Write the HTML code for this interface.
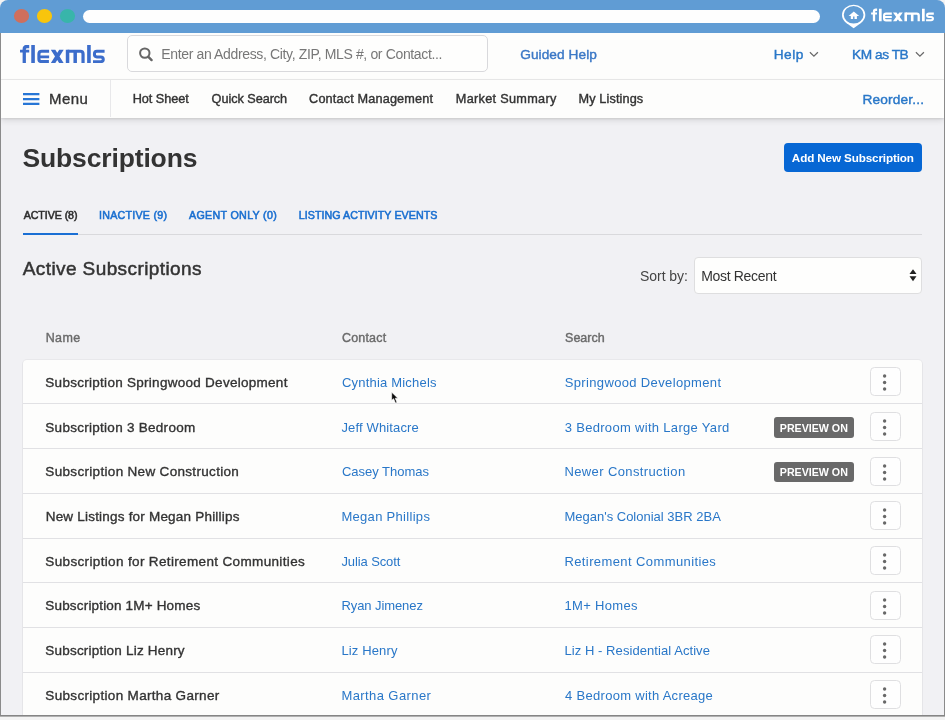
<!DOCTYPE html>
<html lang="en">
<head>
<meta charset="utf-8">
<title>Subscriptions - flexmls</title>
<style>
*{box-sizing:border-box;margin:0;padding:0}
html,body{width:945px;height:720px;overflow:hidden}
body{position:relative;background:#f3f3f3;font-family:"Liberation Sans",sans-serif;color:#333}
.abs,.t,.rb,.kb,.bd{position:absolute}
.t{white-space:nowrap;line-height:20px;height:20px}
/* window frame */
#win{position:absolute;left:0;top:0;width:945px;height:717px;background:#f1f1f4;border-radius:8px 8px 0 0;overflow:hidden}
#frameL{left:0;top:33px;width:1px;height:684px;background:#8b8b8b}
#frameR{left:944px;top:33px;width:1px;height:684px;background:#8b8b8b}
#frameB{left:0;top:715px;width:945px;height:2px;background:linear-gradient(180deg,#858585 0,#858585 50%,#b0b0b0 50%,#b0b0b0 100%)}
#titlebar{left:0;top:0;width:945px;height:33px;background:#609cd4}
.dot{position:absolute;top:9.3px;width:15.4px;height:13.6px;border-radius:50%}
#pill{left:83px;top:10.4px;width:736.5px;height:12.6px;border-radius:7px;background:#fefefe}
/* header */
#hdr{left:1px;top:33px;width:943px;height:46px;background:#fdfdfc}
#hdrline{left:1px;top:79px;width:943px;height:1px;background:#eaeaea}
#nav{left:1px;top:80px;width:943px;height:38px;background:#fdfdfc;box-shadow:0 1px 2px rgba(0,0,0,.10),0 3px 6px rgba(0,0,0,.09)}
#navdiv{left:110px;top:80px;width:1px;height:37px;background:#e8e8ea}
#search{left:127px;top:35px;width:361px;height:37px;border:1px solid #d9d9dc;border-radius:5px;background:#fefefd}
/* body */
#btn{left:784px;top:143px;width:138px;height:29px;border-radius:4px;background:#0767d4}
#tabline{left:23px;top:234px;width:899px;height:1px;background:#d9d9dc}
#tabact{left:23px;top:233px;width:54.5px;height:2px;background:#1a6fd4}
#sel{left:694px;top:257px;width:228px;height:37px;border:1px solid #dededf;border-radius:4px;background:#fefefd}
#card{left:23px;top:360px;width:899px;height:370px;background:#fdfdfc;border-radius:4px 4px 0 0;box-shadow:0 0 0 1px rgba(0,0,0,.035),0 1px 2px rgba(0,0,0,.06)}
.rb{left:23px;width:899px;height:1px;background:#e1e1e4}
.kb{left:870.4px;width:30.3px;height:29.2px;border:1px solid #dfdfe1;border-radius:4.5px;background:#fefefe}
.kb svg{position:absolute;left:0;top:0}
.bd{left:774px;width:80.4px;height:20.4px;border-radius:3px;background:#696969}
</style>
</head>
<body>
<div id="win">
  <div class="abs" id="titlebar"></div>
  <div class="dot" style="left:14.1px;background:#cf6f5d"></div>
  <div class="dot" style="left:36.7px;background:#f8c50c"></div>
  <div class="dot" style="left:59.8px;background:#38b5aa"></div>
  <div class="abs" id="pill"></div>
  <!-- title-bar pin + wordmark -->
  <svg class="abs" style="left:836px;top:0px" width="40" height="32" viewBox="836 0 40 32">
    <path fill="#fff" fill-rule="evenodd" d="M842 14.9A11.65 10.2 0 0 1 865.3 14.9C865.3 19.6 861.6 22.6 859.2 24.2L853.65 28.2 848.1 24.2C845.7 22.6 842 19.6 842 14.9ZM843.75 14.8A9.9 8.8 0 0 0 863.55 14.8A9.9 8.8 0 0 0 843.75 14.8Z"/>
    <path fill="#fff" d="M853.8 11.5L859.2 15.9H856.9V19.1H854.5V16.5H853.1V19.1H850.8V15.9H848.6Z"/>
  </svg>
  <svg class="abs" style="left:868px;top:4px" width="70" height="22" viewBox="868 4 70 22">
    <g fill="none" stroke="#fff" stroke-linejoin="round">
      <path d="M877.1 9.75H875.9Q874 9.75 874 11.6V21.3" stroke-width="2.3"/>
      <path d="M871.1 13.6H877" stroke-width="2"/>
      <path d="M880.3 8.7V21.3M923.35 8.7V21.3" stroke-width="2.7"/>
      <path d="M891.8 13.6H886Q884.1 13.6 884.1 15.5V18.4Q884.1 20.3 886 20.3H891.6" stroke-width="2.15"/>
      <path d="M884.1 16.95H891.8" stroke-width="1.9"/>
      <path d="M893 12.6H896.5L902.8 21.3H899.3ZM899.3 12.6H902.8L896.5 21.3H893Z" fill="#fff" stroke="none"/>
      <path d="M905.7 21.3V12.6M912.2 21.3V13.6" stroke-width="2.6"/>
      <path d="M905.7 13.6H916.8Q918.7 13.6 918.7 15.5V21.3" stroke-width="2.3"/>
      <path d="M933.8 13.6H928.9Q927.1 13.6 927.1 15.3Q927.1 16.95 928.9 16.95H931.1Q932.9 16.95 932.9 18.6Q932.9 20.3 931.1 20.3H926.1" stroke-width="2.1"/>
    </g>
  </svg>

  <div class="abs" id="hdr"></div>
  <div class="abs" id="hdrline"></div>
  <div class="abs" id="nav"></div>
  <div class="abs" id="navdiv"></div>
  <!-- header wordmark -->
  <svg class="abs" style="left:20px;top:45px;color:#3c6dcb" width="85.3" height="18.1" viewBox="20 45 85.3 18.1">
    <g fill="none" stroke="#3c6dcb" stroke-linejoin="round">
      <path d="M29.2 46.5H27Q24.25 46.5 24.25 49.2V63.1" stroke-width="3.3"/>
      <path d="M20 51.15H29.2" stroke-width="2.7"/>
      <path d="M33.05 45V63.1M88.95 45V63.1" stroke-width="3.6"/>
      <path d="M49.1 51.25H41.7Q38.9 51.25 38.9 54V58.9Q38.9 61.65 41.7 61.65H48.9" stroke-width="3.1"/>
      <path d="M38.9 56.95H49.1" stroke-width="2.8"/>
      <path d="M50.8 49.8H55.3L63.7 63.1H59.2ZM59.2 49.8H63.7L55.3 63.1H50.8Z" fill="currentColor" stroke="none"/>
      <path d="M67.55 63.1V49.8M75.2 63.1V51" stroke-width="3.5"/>
      <path d="M67.55 51.25H80.3Q83.05 51.25 83.05 54V63.1" stroke-width="3.2"/>
      <path d="M104.6 51.25H96.9Q94.4 51.25 94.4 54.1Q94.4 56.95 96.9 56.95H100.8Q103.3 56.95 103.3 59.3Q103.3 61.65 100.8 61.65H93" stroke-width="3"/>
    </g>
  </svg>
  <div class="abs" id="search"></div>
  <!-- magnifier -->
  <svg class="abs" style="left:136px;top:44px" width="20" height="20" viewBox="136 44 20 20">
    <circle cx="144.8" cy="53.1" r="4.7" fill="none" stroke="#666" stroke-width="2"/>
    <path d="M148.4 56.8L151.6 60.1" stroke="#666" stroke-width="2.4" stroke-linecap="round"/>
  </svg>
  <!-- chevrons -->
  <svg class="abs" style="left:808px;top:50px" width="12" height="9" viewBox="0 0 12 9"><path d="M1.9 2.3L5.9 6.2 9.9 2.3" fill="none" stroke="#6a6a6a" stroke-width="1.25"/></svg>
  <svg class="abs" style="left:913.7px;top:50px" width="12" height="9" viewBox="0 0 12 9"><path d="M1.9 2.3L5.9 6.2 9.9 2.3" fill="none" stroke="#6a6a6a" stroke-width="1.25"/></svg>
  <!-- hamburger -->
  <svg class="abs" style="left:22px;top:92px" width="19" height="14" viewBox="22 92 19 14"><path d="M23 94.2H39.4M23 99.05H39.4M23 103.9H39.4" stroke="#2776d6" stroke-width="2.2" fill="none"/></svg>

  <div class="abs" id="btn"></div>
  <div class="abs" id="tabline"></div>
  <div class="abs" id="tabact"></div>
  <div class="abs" id="sel"></div>
  <svg class="abs" style="left:909px;top:269px" width="8" height="13" viewBox="0 0 8 13"><path d="M4 0.3L7.5 4.9H0.5zM4 12.2L0.5 7.3H7.5z" fill="#222"/></svg>

  <div class="abs" id="card"></div>
<div class="rb" style="top:403px"></div>
<div class="rb" style="top:448px"></div>
<div class="rb" style="top:493px"></div>
<div class="rb" style="top:538px"></div>
<div class="rb" style="top:582px"></div>
<div class="rb" style="top:627px"></div>
<div class="rb" style="top:672px"></div>
<div class="kb" style="top:367.1px"><svg width="28" height="27" viewBox="0 0 28 27"><g fill="#686868"><circle cx="13.6" cy="8.0" r="1.7"/><circle cx="13.6" cy="14.5" r="1.7"/><circle cx="13.6" cy="21.0" r="1.7"/></g></svg></div>
<div class="kb" style="top:411.8px"><svg width="28" height="27" viewBox="0 0 28 27"><g fill="#686868"><circle cx="13.6" cy="8.0" r="1.7"/><circle cx="13.6" cy="14.5" r="1.7"/><circle cx="13.6" cy="21.0" r="1.7"/></g></svg></div>
<div class="bd" style="top:417.4px"></div>
<div class="kb" style="top:456.5px"><svg width="28" height="27" viewBox="0 0 28 27"><g fill="#686868"><circle cx="13.6" cy="8.0" r="1.7"/><circle cx="13.6" cy="14.5" r="1.7"/><circle cx="13.6" cy="21.0" r="1.7"/></g></svg></div>
<div class="bd" style="top:462.1px"></div>
<div class="kb" style="top:501.2px"><svg width="28" height="27" viewBox="0 0 28 27"><g fill="#686868"><circle cx="13.6" cy="8.0" r="1.7"/><circle cx="13.6" cy="14.5" r="1.7"/><circle cx="13.6" cy="21.0" r="1.7"/></g></svg></div>
<div class="kb" style="top:545.9px"><svg width="28" height="27" viewBox="0 0 28 27"><g fill="#686868"><circle cx="13.6" cy="8.0" r="1.7"/><circle cx="13.6" cy="14.5" r="1.7"/><circle cx="13.6" cy="21.0" r="1.7"/></g></svg></div>
<div class="kb" style="top:590.5px"><svg width="28" height="27" viewBox="0 0 28 27"><g fill="#686868"><circle cx="13.6" cy="8.0" r="1.7"/><circle cx="13.6" cy="14.5" r="1.7"/><circle cx="13.6" cy="21.0" r="1.7"/></g></svg></div>
<div class="kb" style="top:635.2px"><svg width="28" height="27" viewBox="0 0 28 27"><g fill="#686868"><circle cx="13.6" cy="8.0" r="1.7"/><circle cx="13.6" cy="14.5" r="1.7"/><circle cx="13.6" cy="21.0" r="1.7"/></g></svg></div>
<div class="kb" style="top:679.9px"><svg width="28" height="27" viewBox="0 0 28 27"><g fill="#686868"><circle cx="13.6" cy="8.0" r="1.7"/><circle cx="13.6" cy="14.5" r="1.7"/><circle cx="13.6" cy="21.0" r="1.7"/></g></svg></div>
<div id="txt" style="position:absolute;left:0;top:0;width:945px;height:717px;will-change:transform">
<span class="t" id="t0" style="left:161.28px;top:44.00px;font-size:14px;font-weight:400;color:#777777;letter-spacing:-0.357px;">Enter an Address, City, ZIP, MLS #, or Contact...</span>
<span class="t" id="t1" style="left:520.19px;top:45.00px;font-size:13.7px;font-weight:400;-webkit-text-stroke:0.42px currentColor;color:#3b78c6;letter-spacing:0.065px;">Guided Help</span>
<span class="t" id="t2" style="left:773.71px;top:45.00px;font-size:13.7px;font-weight:400;-webkit-text-stroke:0.42px currentColor;color:#2977c8;letter-spacing:0.474px;">Help</span>
<span class="t" id="t3" style="left:852.12px;top:45.00px;font-size:13.7px;font-weight:400;-webkit-text-stroke:0.42px currentColor;color:#2977c8;letter-spacing:-0.465px;">KM as TB</span>
<span class="t" id="t4" style="left:49.08px;top:89.00px;font-size:15.0px;font-weight:400;-webkit-text-stroke:0.35px currentColor;color:#333333;letter-spacing:0.435px;">Menu</span>
<span class="t" id="t5" style="left:132.63px;top:89.00px;font-size:12.7px;font-weight:400;-webkit-text-stroke:0.4px currentColor;color:#333333;letter-spacing:-0.024px;">Hot Sheet</span>
<span class="t" id="t6" style="left:211.59px;top:89.00px;font-size:12.7px;font-weight:400;-webkit-text-stroke:0.4px currentColor;color:#333333;letter-spacing:-0.053px;">Quick Search</span>
<span class="t" id="t7" style="left:309.08px;top:89.00px;font-size:12.7px;font-weight:400;-webkit-text-stroke:0.4px currentColor;color:#333333;letter-spacing:0.152px;">Contact Management</span>
<span class="t" id="t8" style="left:455.78px;top:89.00px;font-size:12.7px;font-weight:400;-webkit-text-stroke:0.4px currentColor;color:#333333;letter-spacing:0.308px;">Market Summary</span>
<span class="t" id="t9" style="left:578.51px;top:89.00px;font-size:12.7px;font-weight:400;-webkit-text-stroke:0.4px currentColor;color:#333333;letter-spacing:0.120px;">My Listings</span>
<span class="t" id="t10" style="left:862.57px;top:90.00px;font-size:13.7px;font-weight:400;-webkit-text-stroke:0.42px currentColor;color:#2977c8;letter-spacing:0.145px;">Reorder...</span>
<span class="t" id="t11" style="left:22.38px;top:148.00px;font-size:26.5px;font-weight:700;color:#333333;letter-spacing:-0.134px;">Subscriptions</span>
<span class="t" id="t12" style="left:791.83px;top:148.00px;font-size:11.7px;font-weight:700;color:#ffffff;letter-spacing:-0.136px;">Add New Subscription</span>
<span class="t" id="t13" style="left:23.63px;top:205.00px;font-size:10.7px;font-weight:400;-webkit-text-stroke:0.55px currentColor;color:#2e2e2e;letter-spacing:-0.080px;">ACTIVE (8)</span>
<span class="t" id="t14" style="left:99.03px;top:205.00px;font-size:10.7px;font-weight:400;-webkit-text-stroke:0.55px currentColor;color:#1a6fd0;letter-spacing:0.238px;">INACTIVE (9)</span>
<span class="t" id="t15" style="left:189.05px;top:205.00px;font-size:10.7px;font-weight:400;-webkit-text-stroke:0.55px currentColor;color:#1a6fd0;letter-spacing:0.309px;">AGENT ONLY (0)</span>
<span class="t" id="t16" style="left:298.69px;top:205.00px;font-size:10.7px;font-weight:400;-webkit-text-stroke:0.55px currentColor;color:#1a6fd0;letter-spacing:0.051px;">LISTING ACTIVITY EVENTS</span>
<span class="t" id="t17" style="left:22.75px;top:259.00px;font-size:19.0px;font-weight:400;-webkit-text-stroke:0.5px currentColor;color:#333333;letter-spacing:0.402px;">Active Subscriptions</span>
<span class="t" id="t18" style="left:639.99px;top:266.00px;font-size:14px;font-weight:400;color:#444444;letter-spacing:-0.043px;">Sort by:</span>
<span class="t" id="t19" style="left:701.23px;top:266.00px;font-size:14px;font-weight:400;color:#333333;letter-spacing:-0.325px;">Most Recent</span>
<span class="t" id="t20" style="left:45.76px;top:328.00px;font-size:12.5px;font-weight:400;-webkit-text-stroke:0.4px currentColor;color:#6a6a6a;letter-spacing:0.329px;">Name</span>
<span class="t" id="t21" style="left:341.99px;top:328.00px;font-size:12.5px;font-weight:400;-webkit-text-stroke:0.4px currentColor;color:#6a6a6a;letter-spacing:0.177px;">Contact</span>
<span class="t" id="t22" style="left:565.06px;top:328.00px;font-size:12.5px;font-weight:400;-webkit-text-stroke:0.4px currentColor;color:#6a6a6a;letter-spacing:0.018px;">Search</span>
<span class="t" id="t23" style="left:45.34px;top:373.00px;font-size:13.5px;font-weight:400;-webkit-text-stroke:0.36px currentColor;color:#333333;letter-spacing:0.278px;">Subscription Springwood Development</span>
<span class="t" id="t24" style="left:341.90px;top:373.00px;font-size:13px;font-weight:400;color:#2977c8;letter-spacing:0.206px;">Cynthia Michels</span>
<span class="t" id="t25" style="left:564.67px;top:373.00px;font-size:13px;font-weight:400;color:#2977c8;letter-spacing:0.358px;">Springwood Development</span>
<span class="t" id="t26" style="left:45.34px;top:418.00px;font-size:13.5px;font-weight:400;-webkit-text-stroke:0.36px currentColor;color:#333333;letter-spacing:0.276px;">Subscription 3 Bedroom</span>
<span class="t" id="t27" style="left:341.44px;top:418.00px;font-size:13px;font-weight:400;color:#2977c8;letter-spacing:0.146px;">Jeff Whitacre</span>
<span class="t" id="t28" style="left:564.68px;top:418.00px;font-size:13px;font-weight:400;color:#2977c8;letter-spacing:0.314px;">3 Bedroom with Large Yard</span>
<span class="t" id="t29" style="left:779.82px;top:418.00px;font-size:10.7px;font-weight:700;color:#ffffff;letter-spacing:-0.025px;">PREVIEW ON</span>
<span class="t" id="t30" style="left:45.34px;top:462.00px;font-size:13.5px;font-weight:400;-webkit-text-stroke:0.36px currentColor;color:#333333;letter-spacing:0.320px;">Subscription New Construction</span>
<span class="t" id="t31" style="left:341.90px;top:462.00px;font-size:13px;font-weight:400;color:#2977c8;letter-spacing:-0.001px;">Casey Thomas</span>
<span class="t" id="t32" style="left:564.42px;top:462.00px;font-size:13px;font-weight:400;color:#2977c8;letter-spacing:0.386px;">Newer Construction</span>
<span class="t" id="t33" style="left:779.82px;top:462.00px;font-size:10.7px;font-weight:700;color:#ffffff;letter-spacing:-0.025px;">PREVIEW ON</span>
<span class="t" id="t34" style="left:45.70px;top:507.00px;font-size:13.5px;font-weight:400;-webkit-text-stroke:0.36px currentColor;color:#333333;letter-spacing:0.205px;">New Listings for Megan Phillips</span>
<span class="t" id="t35" style="left:341.42px;top:507.00px;font-size:13px;font-weight:400;color:#2977c8;letter-spacing:0.302px;">Megan Phillips</span>
<span class="t" id="t36" style="left:564.42px;top:507.00px;font-size:13px;font-weight:400;color:#2977c8;letter-spacing:0.000px;">Megan's Colonial 3BR 2BA</span>
<span class="t" id="t37" style="left:45.34px;top:552.00px;font-size:13.5px;font-weight:400;-webkit-text-stroke:0.36px currentColor;color:#333333;letter-spacing:0.351px;">Subscription for Retirement Communities</span>
<span class="t" id="t38" style="left:341.44px;top:552.00px;font-size:13px;font-weight:400;color:#2977c8;letter-spacing:-0.109px;">Julia Scott</span>
<span class="t" id="t39" style="left:564.42px;top:552.00px;font-size:13px;font-weight:400;color:#2977c8;letter-spacing:0.401px;">Retirement Communities</span>
<span class="t" id="t40" style="left:45.34px;top:596.00px;font-size:13.5px;font-weight:400;-webkit-text-stroke:0.36px currentColor;color:#333333;letter-spacing:0.172px;">Subscription 1M+ Homes</span>
<span class="t" id="t41" style="left:341.42px;top:596.00px;font-size:13px;font-weight:400;color:#2977c8;letter-spacing:-0.078px;">Ryan Jimenez</span>
<span class="t" id="t42" style="left:564.47px;top:596.00px;font-size:13px;font-weight:400;color:#2977c8;letter-spacing:0.328px;">1M+ Homes</span>
<span class="t" id="t43" style="left:45.34px;top:641.00px;font-size:13.5px;font-weight:400;-webkit-text-stroke:0.36px currentColor;color:#333333;letter-spacing:0.200px;">Subscription Liz Henry</span>
<span class="t" id="t44" style="left:341.42px;top:641.00px;font-size:13px;font-weight:400;color:#2977c8;letter-spacing:0.142px;">Liz Henry</span>
<span class="t" id="t45" style="left:564.42px;top:641.00px;font-size:13px;font-weight:400;color:#2977c8;letter-spacing:0.068px;">Liz H - Residential Active</span>
<span class="t" id="t46" style="left:45.34px;top:686.00px;font-size:13.5px;font-weight:400;-webkit-text-stroke:0.36px currentColor;color:#333333;letter-spacing:0.323px;">Subscription Martha Garner</span>
<span class="t" id="t47" style="left:341.42px;top:686.00px;font-size:13px;font-weight:400;color:#2977c8;letter-spacing:0.413px;">Martha Garner</span>
<span class="t" id="t48" style="left:565.11px;top:686.00px;font-size:13px;font-weight:400;color:#2977c8;letter-spacing:0.289px;">4 Bedroom with Acreage</span>
</div>
  <!-- mouse cursor -->
  <svg class="abs" style="left:389px;top:390px" width="12" height="15" viewBox="389 390 12 15">
    <path d="M391.7 392.2V400.3L393.6 398.7 395.5 403.1 397 402.4 395.2 398.2H397.8Z" fill="#0a0a0a" stroke="#fff" stroke-width="0.6" stroke-linejoin="round"/>
  </svg>
  <div class="abs" id="frameL"></div>
  <div class="abs" id="frameR"></div>
  <div class="abs" id="frameB"></div>
</div>
</body>
</html>
